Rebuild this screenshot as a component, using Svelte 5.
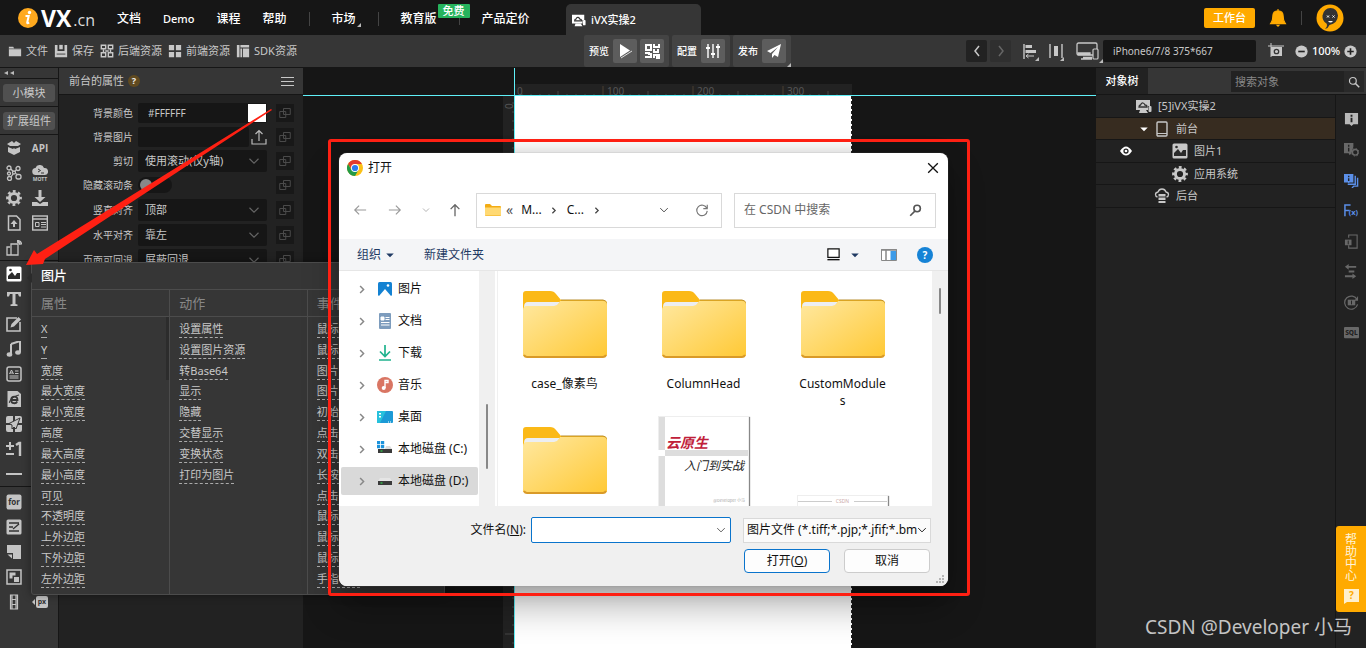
<script>
  const icons = {
    folder: '<path d="M1 3h5l1 2h8v9H1z" fill="currentColor"/><path d="M1 5.500h14" stroke="#363636" stroke-width=".7"/>',
    save: '<path d="M1 1h3v7h8V1h3v14H1z" fill="currentColor"/><path d="M6 1h4v5H6z" fill="currentColor"/><path d="M3 11.500h10" stroke="#363636"/>',
    backres: '<g fill="none" stroke="currentColor" stroke-width="1.600"><path d="M1.500 1.500h5v4h-5zM9.500 1.500h5v4h-5zM1.500 10h5v4.500h-5zM9.500 10h5v4.500h-5z"/><path d="M4 6v3M12 6v3M6 8h4"/></g>',
    frontres: '<path d="M1 1h6v6H1zM9 1h6v6H9zM1 9h6v6H1zM9 9h6v6H9z" fill="currentColor"/>',
    sdk: '<path d="M1 1h3v14H1zM5 1h10v3H5zM5 5h2v10H5zM8 5h7v10H8z" fill="currentColor"/>',
    app: '<path d="M0 2h14v6h-2v4H0z" fill="currentColor"/><path d="M4 12h6l2 3H3z" fill="currentColor"/><path d="M3 9c0-2 1.500-2 1.500-2s1-2.500 2.500-2 2 2 2 2 2 0 2 2z" fill="none" stroke="#333" stroke-width="1.300"/><rect x="12.500" y="8" width="3" height="6" rx="1" fill="currentColor"/>',
    play: '<path d="M3 1l10 6.500L3 14z" fill="#fff"/><path d="M4 15l11-7" stroke="#ddd" stroke-width="1"/>',
    qr: '<g fill="none" stroke="#fff" stroke-width="2"><path d="M2 2h5v5H2z"/><path d="M10 1v3h5V1M14 6v3h-4V6M1 10h4v2M1 14h6v-4M10 15v-3h3v3h2v-4"/></g>',
    sliders: '<g stroke="#fff" stroke-width="1.400"><path d="M3 1v14M8 1v14M13 1v14"/><path d="M1 5h4M6 11h4M11 4h4" stroke-width="2"/></g>',
    plane: '<path d="M15 1L1 8l3.500 2L12 4 6 11v4l2.500-3L12 14z" fill="#fff"/>',
    left: '<path d="M10 3L6 8l4 5" fill="none" stroke="currentColor" stroke-width="1.500"/>',
    right: '<path d="M6 3l4 5-4 5" fill="none" stroke="currentColor" stroke-width="1.500"/>',
    chev: '<path d="M6 3l5 5-5 5" fill="none" stroke="currentColor" stroke-width="2.200"/>',
    align: '<path d="M1 1v15" stroke="currentColor" stroke-width="1.400"/><path d="M2.500 2H9v3H2.500zM2.500 7H13v3H2.500z" fill="currentColor"/><path d="M3 13h8M5.500 11L3 13l2.500 2" stroke="currentColor" fill="none"/>',
    dist: '<path d="M2 1v14M14 1v14" stroke="currentColor" stroke-width="1.400"/><path d="M6 3h4v10H6z" fill="currentColor"/>',
    devices: '<g fill="none" stroke="currentColor" stroke-width="1.300"><rect x="1" y="1" width="20" height="12" rx="1.500"/><path d="M2 11h12v1.500H2z"/><path d="M7 15.500h9M5 17h11"/></g><rect x="17" y="7" width="5" height="10" rx="1" fill="#363636" stroke="currentColor" stroke-width="1.200"/>',
    shot: '<path d="M0 3h16M3 0v14" stroke="currentColor"/><path d="M3 4h11v9H3z" fill="currentColor"/><circle cx="8.500" cy="8.500" r="2.200" fill="none" stroke="#363636" stroke-width="1.300"/>',
    minus: '<circle cx="8" cy="8" r="7.500" fill="currentColor"/><path d="M4 8h8" stroke="#222" stroke-width="2"/>',
    plus: '<circle cx="8" cy="8" r="7.500" fill="currentColor"/><path d="M4 8h8M8 4v8" stroke="#222" stroke-width="2"/>',
    bell: '<path d="M8 0v2M8 1.500c3.500 0 4.600 2.500 4.600 5 0 4 1 5 2 6.500H1.400c1-1.500 2-2.500 2-6.500 0-2.500 1.100-5 4.600-5z" fill="#fa0" stroke="#fa0"/><path d="M6 14h4l-2 2z" fill="#fa0"/>',
    link: '<g fill="none" stroke="currentColor" stroke-width="1.300"><path d="M1 6h8v8H1zM6 2h9v8H6z"/></g>',
    box: '<path d="M1 4l5-3 2 2 2-2 5 3-3 2H4zM2 7l5 2 1-1 1 1 5-2v5l-6 3-6-3z" fill="currentColor"/>',
    net: '<g fill="none" stroke="currentColor" stroke-width="1.300"><circle cx="3" cy="3" r="2"/><circle cx="3" cy="8.500" r="1.500"/><circle cx="3.500" cy="13.500" r="2"/><circle cx="12" cy="3.500" r="2"/><circle cx="8" cy="7.500" r="1.500"/><path d="M5 4l2 2.500M10 5L9 6.500M5 12l2-3M9.500 8.500l2 1"/><rect x="10" y="9.500" width="5" height="4.500" rx="2"/></g>',
    mqtt: '<path d="M4 10a3.500 3.500 0 01-.5-7A4.500 4.500 0 0112 3a3.500 3.500 0 011 7z" fill="currentColor"/><path d="M6 4l2.500 1.500L6 7M9 8h3" stroke="#363636" fill="none"/><text x="8" y="15.500" font-size="5" font-weight="700" text-anchor="middle" fill="currentColor">MQTT</text>',
    gear: '<circle cx="8" cy="8" r="4.600" fill="none" stroke="currentColor" stroke-width="3"/><circle cx="8" cy="8" r="6.700" fill="none" stroke="currentColor" stroke-width="2.400" stroke-dasharray="2.800 2.462" stroke-dashoffset="1.400"/>',
    download: '<path d="M6.500 0h3v7h4L8 12 2.500 7h4zM0 12h5l3 2 3-2h5v4H0z" fill="currentColor"/>',
    fileadd: '<path d="M2.500 1h8l3.500 3.500V15H2.500z" fill="none" stroke="currentColor" stroke-width="1.500"/><path d="M8 5l3.500 4H9v3H7V9H4.500z" fill="currentColor"/>',
    form: '<rect x=".7" y="1" width="14.600" height="14" fill="none" stroke="currentColor" stroke-width="1.400"/><path d="M1 4h14" stroke="currentColor" stroke-width="1.500"/><path d="M3.500 7.500h3.500v4H3.500zM9 7.500h5M9 9.500h5M9 12h5" fill="none" stroke="currentColor"/>',
    phones: '<g fill="none" stroke="currentColor" stroke-width="1.300"><path d="M4 7H1v8h4M5 4h7v11H5zM11 2q3 0 3 3M11 .5q4.500 0 4.500 4"/></g>',
    image: '<rect x=".5" y=".5" width="15" height="15" rx="1.500" fill="currentColor"/><path d="M2 13V10l4-4 3 4 2-3h3v6z" fill="#2b2b2b"/><circle cx="4.500" cy="4" r="1.300" fill="#2b2b2b"/>',
    text: '<path d="M1 1h14v4.500h-2L12 3H9.500v10l2 .5V15h-7v-1.500l2-.5V3H4l-1 2.500H1z" fill="currentColor"/>',
    edit: '<path d="M11 2H1v13h13V6" fill="none" stroke="currentColor" stroke-width="1.600"/><path d="M4.500 11.500l1-3.500 7-7 2.500 2.500-7 7z" fill="currentColor"/>',
    music: '<path d="M5 3l9-3v11.500" fill="none" stroke="currentColor" stroke-width="2"/><path d="M5 3v10" stroke="currentColor" stroke-width="2"/><ellipse cx="3.500" cy="13.500" rx="2.800" ry="2.200" fill="currentColor"/><ellipse cx="12" cy="11.500" rx="2.800" ry="2.200" fill="currentColor"/>',
    para: '<rect x="1" y="1" width="14" height="14" rx="2" fill="none" stroke="currentColor" stroke-width="1.500"/><path d="M3.500 8l2-4 2 4M4 7h3M9 5h3.500M9 7.500h3.500M3.500 10h9M3.500 12h9" fill="none" stroke="currentColor"/>',
    page: '<path d="M1.500 0h10L15 3v13H1.500z" fill="currentColor"/><path d="M5 9h6.500c0-4.500-6-4.500-6.500 0 0 4 5 4 6.200 1.500" fill="none" stroke="#363636" stroke-width="1.800"/><path d="M3.500 12c-1-2 4-7 9.500-8" fill="none" stroke="#363636"/>',
    send: '<path d="M0 2q0-2 2-2h5v7H0zM9 0h5q2 0 2 2v5H9zM0 9h7v7H2q-2 0-2-2zM9 9h7v5q0 2-2 2H9z" fill="currentColor"/><path d="M14 2L3 7.500l3 1.500v4l2-2 2 2z" fill="currentColor" stroke="#363636"/>',
    pm: '<path d="M0 5h8M4 1v8M0 13h8" stroke="currentColor" stroke-width="2"/><path d="M10 4l3-2h1v13" fill="none" stroke="currentColor" stroke-width="2.400"/>',
    line: '<path d="M0 8h16" stroke="currentColor" stroke-width="2"/>',
    for: '<rect x=".5" y=".5" width="15" height="15" rx="2" fill="currentColor"/><text x="8" y="10.500" font-size="8" font-weight="700" text-anchor="middle" fill="#333">for</text>',
    sign: '<rect x=".5" y=".5" width="15" height="15" rx="1.500" fill="currentColor"/><path d="M3 4h10M3 8h4M3 12h10M7 10l6-5" stroke="#333" stroke-width="1.300"/>',
    note: '<path d="M1 1h14v14H7V9H1z" fill="currentColor"/><path d="M1.500 10.500H6v4z" fill="currentColor"/>',
    layers: '<rect x="1" y="1" width="14" height="14" fill="none" stroke="currentColor" stroke-width="1.500"/><path d="M3.500 3.500h6v3h-3v3h-3zM8 8h5v5H8z" fill="currentColor"/>',
    film: '<path d="M4.500 1h7v14h-7zM6 5.500h4M6 10.500h4M6 1v14M10 1v14" fill="none" stroke="currentColor" stroke-width="1.200"/>',
    px: '<path d="M0 8l3-3v6z" fill="currentColor"/><rect x="4" y="2" width="12" height="12" rx="2" fill="currentColor"/><text x="10" y="10" font-size="7" font-weight="700" text-anchor="middle" fill="#333">px</text>',
    phone: '<rect x="3" y="1" width="10" height="14" rx="1" fill="none" stroke="currentColor" stroke-width="1.400"/><path d="M3 12.500h10" stroke="currentColor"/>',
    server: '<path d="M3.500 9Q1.500 8.500 1.500 6.500T4 4q1-3 4-3t4 3q2.500.5 2.500 2.500T12.500 9" fill="none" stroke="currentColor" stroke-width="1.300"/><path d="M4.500 6h7v2.500h-7zM4.500 9.500h7V12h-7zM4.500 13h7v2h-7z" fill="currentColor"/>',
    eye: '<path d="M0 8q8-12 16 0-8 12-16 0z" fill="#fff"/><circle cx="8" cy="8" r="3.500" fill="#222"/><circle cx="8" cy="8" r="1.800" fill="#fff"/>',
    info: '<path d="M1 1h14v12h-5l-2 2-2-2H1z" fill="currentColor"/><path d="M8 3v2M8 6v5" stroke="#222" stroke-width="2"/>',
    infogear: '<path d="M0 1h10v4L8 12l-2 2-1-2H0z" fill="currentColor"/><path d="M5 3v2M5 6v4" stroke="#222" stroke-width="1.500"/><circle cx="12" cy="11" r="3" fill="#222" stroke="currentColor" stroke-width="1.500"/><circle cx="12" cy="11" r="4" fill="none" stroke="currentColor" stroke-dasharray="1.570 1.570"/>',
    infos: '<path d="M0 1h10v9H6l-1 1-1-1H0z" fill="currentColor"/><path d="M12 3v9H4M14.500 5v9h-4l-2 2" fill="none" stroke="currentColor" stroke-width="1.500"/><path d="M5 3v1.500M5 5.500v3" stroke="#222" stroke-width="1.500"/>',
    fx: '<path d="M1 14V2h6M1 8h5" fill="none" stroke="currentColor" stroke-width="1.600"/><text x="5" y="13" font-size="8" font-weight="700" fill="currentColor">(x)</text>',
    infodoc: '<path d="M5 4V1h9v14H5v-3" fill="none" stroke="currentColor" stroke-width="1.200"/><path d="M1 6h7v6H1z" fill="currentColor"/><path d="M4.500 7v4" stroke="#222"/>',
    swap: '<path d="M3 3h10M1 13h10M5 8h6" stroke="currentColor" stroke-width="2"/><path d="M5 0L1 3l4 3zM9 10l4 3-4 3z" fill="currentColor"/>',
    cycle: '<path d="M14 5a7 7 0 10.500 5" fill="none" stroke="currentColor" stroke-width="1.300"/><path d="M15 1v5h-4z" fill="currentColor"/><path d="M4 5h8v6H4z" fill="currentColor"/><path d="M8 6v4" stroke="#222"/>',
    sql: '<rect x="0" y="2" width="16" height="12" rx="1" fill="currentColor"/><text x="8" y="10.500" font-size="7" font-weight="800" text-anchor="middle" fill="#222">SQL</text>',
    search: '<circle cx="6.500" cy="6.500" r="4.500" fill="none" stroke="currentColor" stroke-width="1.600"/><path d="M10 10l5 5" stroke="currentColor" stroke-width="2"/>',
    burger: '<path d="M0 3h16M0 8h16M0 13h16" stroke="currentColor" stroke-width="1.300"/>',
    upload: '<path d="M1 10v5h14v-5M8 12V2M4.500 5L8 1.500 11.500 5" fill="none" stroke="#bbb" stroke-width="1.200"/>',
    down: '<path d="M2 5l6 6 6-6" fill="none" stroke="currentColor" stroke-width="1.500"/>',
    arrowl: '<path d="M15 8H2M7 3L2 8l5 5" fill="none" stroke="currentColor" stroke-width="1.300"/>',
    arrowr: '<path d="M1 8h13M9 3l5 5-5 5" fill="none" stroke="currentColor" stroke-width="1.300"/>',
    arrowu: '<path d="M8 15V2M3 7l5-5 5 5" fill="none" stroke="currentColor" stroke-width="1.500"/>',
    refresh: '<path d="M13.500 6A6 6 0 1014 9M14 2v4.500H9.500" fill="none" stroke="#777" stroke-width="1.300"/>',
    find: '<circle cx="10" cy="5.500" r="4" fill="none" stroke="currentColor" stroke-width="2"/><path d="M7.500 8.500L1.500 14.500" stroke="currentColor" stroke-width="2"/>',
    close: '<path d="M2.500 2.500l11 11M13.500 2.500l-11 11" stroke="#111" stroke-width="1.500"/>',
    chrome: '<circle cx="8" cy="8" r="8" fill="#fbc116"/><path d="M8 4h6.930A8 8 0 001.070 4L5 10z" fill="#e33b2e"/><path d="M1.070 4A8 8 0 008 16l3.500-6L8 8l-3.500 2z" fill="#229a47"/><circle cx="8" cy="8" r="4" fill="#fff"/><circle cx="8" cy="8" r="3.100" fill="#2b7cf0"/>',
    pics: '<rect x="1" y="1" width="14" height="14" rx="1.500" fill="#1482d2"/><path d="M2 15l6-7 6 7z" fill="#fff"/><circle cx="11" cy="4.500" r="1.300" fill="#fff"/>',
    docs: '<rect x="2" y="0" width="12" height="16" rx="1" fill="#7d9cbd"/><path d="M4 4h3v3H4zM8.500 4.500h4M8.500 6.500h4M4 9.500h8.500M4 12h8.500" stroke="#fff" fill="#fff"/>',
    dl: '<path d="M8 0v11M3 6.500l5 5 5-5M2 15h12" fill="none" stroke="#20b38e" stroke-width="1.700"/>',
    tune: '<circle cx="8" cy="8" r="8" fill="#d97563"/><path d="M8 11V3.500h3v2H8" fill="none" stroke="#fff" stroke-width="1.400"/><circle cx="6.700" cy="11" r="2" fill="#fff"/>',
    desk: '<rect x="0" y="2" width="16" height="12" rx="1" fill="#1c9ad6"/><path d="M0 2h9L3 14H0z" fill="#27c1dc"/><path d="M2 4h2v1.500H2zM2 7h2v1.500H2zM11 12.500h1v1h-1zM13 12.500h1v1h-1z" fill="#fff"/>',
    diskc: '<path d="M0 0h3.200v3.200H0zM4 0h3.200v3.200H4zM0 4h3.200v3.200H0zM4 4h3.200v3.200H4z" fill="#1c93dc"/><path d="M9 5h4l2 3H8z" fill="#ddd"/><path d="M1 8h14v4H1z" fill="#3a3a3a"/><path d="M3.500 9.500h2v1h-2z" fill="#2df04f"/>',
    diskd: '<path d="M3 5h10l2 3H1z" fill="#e5e5e5"/><path d="M1 8h14v4H1z" fill="#3a3a3a"/><path d="M3.500 9.500h2v1h-2z" fill="#2df04f"/>',
    sfolder: '<path d="M0 3q0-1 1-1h4l2 2h8q1 0 1 1v8q0 1-1 1H1q-1 0-1-1z" fill="#f3ac14"/><path d="M0 5.500h16V13q0 .5-1 .5H1q-1 0-1-.5z" fill="#ffd973"/>',
    view: '<path d="M2 2h12v9H2z" fill="#fff" stroke="#111" stroke-width="1.300"/><path d="M1.500 13.500h13" stroke="#111" stroke-width="1.500"/>',
    pane: '<path d="M.5 2.500h15v11H.5z" fill="#fff" stroke="#888"/><path d="M0 3h16M5 3v10" stroke="#888" stroke-width="1.500"/><path d="M9.500 4H15v9H9.500z" fill="#3d9be8"/>',
    tri: '<path d="M3 6h10l-5 5z" fill="currentColor"/>'
  };

  const files = [['folder', '文件'], ['save', '保存'], ['backres', '后端资源'], ['frontres', '前端资源'], ['sdk', 'SDK资源']];
  const palette = [
    [['box', 'api'], ['net', 'mqtt'], ['gear', 'download'], ['fileadd', 'form'], ['phones']],
    [['image'], ['text'], ['edit'], ['music'], ['para'], ['page'], ['send'], ['pm'], ['line']],
    [['for'], ['sign'], ['note'], ['layers'], ['film', 'px']]
  ];
  const props = [
    { label: '背景颜色', kind: 'color', value: '#FFFFFF' },
    { label: '背景图片', kind: 'file', value: '' },
    { label: '剪切', kind: 'select', value: '使用滚动(仅y轴)' },
    { label: '隐藏滚动条', kind: 'toggle' },
    { label: '竖直对齐', kind: 'select', value: '顶部', tall: true },
    { label: '水平对齐', kind: 'select', value: '靠左', tall: true },
    { label: '页面可回退', kind: 'select', value: '屏蔽回退', tall: true }
  ];
  const members = [
    { title: '属性', items: ['X', 'Y', '宽度', '最大宽度', '最小宽度', '高度', '最大高度', '最小高度', '可见', '不透明度', '上外边距', '下外边距', '左外边距'] },
    { title: '动作', items: ['设置属性', '设置图片资源', '转Base64', '显示', '隐藏', '交替显示', '变换状态', '打印为图片'] },
    { title: '事件', items: ['鼠标', '鼠标', '图片', '图片', '初始', '点击', '双击', '长按', '点击', '鼠标', '鼠标', '鼠标', '手指'] }
  ];
  const tree = [
    { icon: 'app', name: '[5]iVX实操2', depth: 0 },
    { icon: 'phone', name: '前台', depth: 1, open: true },
    { icon: 'image', name: '图片1', depth: 2, eye: true },
    { icon: 'gear', name: '应用系统', depth: 2 },
    { icon: 'server', name: '后台', depth: 1 }
  ];
  const side = [['info', 'on'], ['infogear', ''], ['infos', 'blue'], ['fx', 'blue'], ['infodoc', ''], ['swap', ''], ['cycle', ''], ['sql', '']];
  const places = [['pics', '图片'], ['docs', '文档'], ['dl', '下载'], ['tune', '音乐'], ['desk', '桌面'], ['diskc', '本地磁盘 (C:)'], ['diskd', '本地磁盘 (D:)']];
  const folders = ['case_像素鸟', 'ColumnHead', 'CustomModules', ''];
  const xTicks = Array.from({ length: 37 }, (_, i) => i);
  const yTicks = Array.from({ length: 62 }, (_, i) => i);
</script>

{#snippet icon(name, size = 16)}
  <svg class="ic" width={size} height={size} viewBox="0 0 16 16" aria-hidden="true">{@html icons[name]}</svg>
{/snippet}

{#snippet bigFolder()}
  <svg class="big" width="84" height="68" viewBox="0 0 84 68" aria-hidden="true">
    <defs>
      <linearGradient id="fold" x1="0" y1="0" x2="1" y2="1">
        <stop offset="0" stop-color="#ffe8a0" /><stop offset="1" stop-color="#ffc935" />
      </linearGradient>
    </defs>
    <path d="M0 64V4q0-3 3-3h24q4 0 6 3l5 6h42q4 0 4 4v50q0 3-3 3H3q-3 0-3-3z" fill="#fbb917" />
    <path d="M38 10h42q3 0 4 4" fill="none" stroke="#b98f30" />
    <path d="M1 17q0-5 4-5h32l-4 5H1z" fill="#eceef2" />
    <path d="M0 20q0-4 4-4h27q3 0 5-3l1-2h43q4 0 4 4v48q0 4-4 4H4q-4 0-4-4z" fill="url(#fold)" />
    <path d="M1 65q1 2 3 2h76q2 0 3-2" fill="none" stroke="#d99a28" stroke-width="2" />
  </svg>
{/snippet}

<div class="app">
  <header class="top">
    <a class="logo" href="#home" aria-label="iVX.cn">
      <svg width="22" height="22" viewBox="0 0 22 22" aria-hidden="true">
        <circle cx="11" cy="11" r="10" fill="#ffa91e" />
        <circle cx="12.500" cy="5.500" r="1.700" fill="#fff" />
        <path d="M8.500 9h3.200l-1.500 6.500q-.2 1.200 2 .2" fill="none" stroke="#fff" stroke-width="2" />
      </svg>
      <strong>VX</strong><span>.cn</span>
    </a>
    <nav class="menu">
      <a href="#docs">文档</a><a href="#demo" class="latin">Demo</a><a href="#course">课程</a><a href="#help">帮助</a>
      <i class="bar"></i>
      <a href="#market" class="corner">市场</a>
      <i class="bar"></i>
      <a href="#edu" class="edu">教育版<b>免费</b></a>
      <i class="bar short"></i>
      <a href="#price">产品定价</a>
    </nav>
    <a class="tab" href="#project">{@render icon('app', 14)}iVX实操2</a>
    <div class="account">
      <button class="work">工作台</button>
      <button class="plain" aria-label="通知">{@render icon('bell', 18)}</button>
      <i class="bar"></i>
      <button class="plain" aria-label="账户">
        <svg class="ic" width="28" height="28" viewBox="0 0 28 28" aria-hidden="true">
          <circle cx="14" cy="14" r="13.500" fill="#fa0" />
          <path d="M9 25q3-3 1.500-5.500Q6 16.500 6.500 11.500 8 4 14.500 4T22 11.500q-.5 8-8.500 9.500-1 3-4.500 4z" fill="#333" />
          <path d="M11 11.500l2 2m0-2l-2 2M16.500 11.500l2 2m0-2l-2 2" stroke="#fff" />
          <path d="M12 17q2.500 3 5 0z" fill="#fff" />
        </svg>
      </button>
    </div>
  </header>

  <div class="tools">
    <div class="filetools">
      {#each files as [ic, name]}<button>{@render icon(ic, 14)}{name}</button>{/each}
    </div>
    <div class="groups">
      <div class="group"><span>预览</span><button aria-label="播放">{@render icon('play')}</button><button aria-label="二维码">{@render icon('qr')}</button></div>
      <div class="group"><span>配置</span><button aria-label="参数">{@render icon('sliders')}</button></div>
      <div class="group corner"><span>发布</span><button aria-label="发送">{@render icon('plane')}</button></div>
    </div>
    <div class="viewtools">
      <button class="hist" aria-label="撤销">{@render icon('left')}</button>
      <button class="hist off" aria-label="重做">{@render icon('right')}</button>
      <button class="corner al" aria-label="对齐">{@render icon('align')}</button>
      <button class="corner di" aria-label="分布">{@render icon('dist')}</button>
      <button class="corner de" aria-label="设备">
        <svg class="ic" width="23" height="19" viewBox="0 0 23 19" aria-hidden="true">{@html icons.devices}</svg>
      </button>
      <input class="device" aria-label="设备尺寸" value="iPhone6/7/8 375*667" />
      <button class="shot" aria-label="截图">{@render icon('shot')}</button>
      <button aria-label="缩小">{@render icon('minus', 13)}</button>
      <span class="zoom">100%</span>
      <button aria-label="放大">{@render icon('plus', 13)}</button>
    </div>
  </div>

  <main>
    <aside class="palette">
      <button class="fold" aria-label="收起"><i></i><i></i></button>
      <div class="chip"><button>小模块</button></div>
      <div class="chip"><button>扩展组件</button></div>
      {#each palette as group}
        <div class="pgroup">
          {#each group as row}
            <div class="prow">
              {#each row as name}
                <button class:on={name === 'image'} aria-label={name === 'api' ? null : name}>
                  {#if name === 'api'}<b>API</b>{:else}{@render icon(name)}{/if}
                </button>
              {/each}
            </div>
          {/each}
        </div>
      {/each}
    </aside>

    <section class="props">
      <h2>前台的属性 <em>?</em><button aria-label="菜单">{@render icon('burger', 13)}</button></h2>
      {#each props as p, i}
        <div class="prop" class:tall={p.tall}>
          <label for={'prop' + i}>{p.label}</label>
          {#if p.kind === 'color'}
            <div class="field"><input id={'prop' + i} value={p.value} /><i class="swatch"></i></div>
          {:else if p.kind === 'file'}
            <div class="field open"><input id={'prop' + i} value="" /><button aria-label="上传">{@render icon('upload')}</button></div>
          {:else if p.kind === 'toggle'}
            <div class="toggle"><input id={'prop' + i} type="checkbox" /></div>
          {:else}
            <div class="select"><select id={'prop' + i}><option>{p.value}</option></select>{@render icon('down', 12)}</div>
          {/if}
          <button class="bind" aria-label="绑定">{@render icon('link', 12)}</button>
        </div>
      {/each}
    </section>

    <section class="canvas">
      <svg class="rulerx" width="337" height="11" aria-hidden="true">
        {#each xTicks as t}
          {#if t % 10 === 0 && t > 0}<path d="M{t * 9 - 2} 2v9" stroke="#4a3f30" /><text x={t * 9 + 2} y="11">{t * 10}</text>
          {:else if t > 0}<path d="M{t * 9 - 2} {t % 5 ? 10 : 7}v4" stroke="#444" />{/if}
        {/each}
        <text x="2" y="11">0</text>
      </svg>
      <svg class="rulery" width="11" height="552" aria-hidden="true">
        {#each yTicks as t}
          {#if t > 0}<path d="M{t % 10 ? 9 : 2} {t * 9 - 2}H11" stroke="#444" />{/if}
        {/each}
        <text transform="translate(10 13) rotate(-90)">0</text>
      </svg>
      <div class="board"></div>
      <i class="guidex"></i><i class="guidey"></i>
    </section>

    <aside class="objects">
      <div class="ohead">
        <button class="otab">对象树</button>
        <input type="search" aria-label="搜索对象" placeholder="搜索对象" />
        <button class="osearch" aria-label="搜索">{@render icon('search', 12)}</button>
      </div>
      <div class="obody">
        <ul class="tree">
          {#each tree as n}
            <li class:sel={n.open} class="d{n.depth}">
              {#if n.eye}<span class="eye">{@render icon('eye', 12)}</span>{/if}
              {#if n.open}<span class="twist">{@render icon('tri', 12)}</span>{/if}
              {@render icon(n.icon)}<span>{n.name}</span>
            </li>
          {/each}
        </ul>
        <div class="side">
          <div class="sideicons">
            {#each side as [name, tone]}<button class={tone} aria-label={name}>{@render icon(name, 15)}</button>{/each}
          </div>
          <a class="help" href="#support">
            <span>帮助中心</span>
            <svg width="17" height="16" viewBox="0 0 17 16" aria-hidden="true"><path d="M1 1h15v13H4l-3 2z" fill="#fff0cd" /><text x="8.500" y="11" font-size="10" font-weight="700" text-anchor="middle" fill="#fa0">?</text></svg>
          </a>
        </div>
      </div>
    </aside>
  </main>

  <section class="members">
    <h3>图片</h3>
    <div class="cols">
      {#each members as col}
        <div class="col">
          <h4>{col.title}</h4>
          <ul>{#each col.items as it}<li><span>{it}</span></li>{/each}</ul>
        </div>
      {/each}
    </div>
  </section>

  <div class="dialog" role="dialog" aria-label="打开">
    <div class="dtitle">{@render icon('chrome')}<span>打开</span><button aria-label="关闭">{@render icon('close', 14)}</button></div>
    <div class="dnav">
      <button class="dim" aria-label="后退">{@render icon('arrowl', 14)}</button>
      <button class="dim" aria-label="前进">{@render icon('arrowr', 14)}</button>
      <button class="dim rec" aria-label="最近">{@render icon('down', 8)}</button>
      <button class="up" aria-label="上一级">{@render icon('arrowu', 14)}</button>
      <div class="addr">
        {@render icon('sfolder')}<span class="dbl">«</span><span class="m">M...</span>{@render icon('chev', 9)}<span class="c">C...</span>{@render icon('chev', 9)}
        <button class="hist2" aria-label="历史">{@render icon('down', 10)}</button><button aria-label="刷新">{@render icon('refresh', 14)}</button>
      </div>
      <div class="dsearch"><input type="search" aria-label="搜索" placeholder="在 CSDN 中搜索" />{@render icon('find', 13)}</div>
    </div>
    <div class="dbar">
      <button class="org">组织{@render icon('tri', 12)}</button><button>新建文件夹</button>
      <button class="view" aria-label="视图">{@render icon('view', 15)}</button>
      <button class="vt" aria-label="视图选项">{@render icon('tri', 12)}</button>
      <button class="pane" aria-label="预览窗格">{@render icon('pane')}</button>
      <button class="q" aria-label="帮助">?</button>
    </div>
    <div class="dbody">
      <ul class="places">
        {#each places as [ic, name], i}
          <li class:cur={i === 6}><span class="chev">{@render icon('chev', 11)}</span>{@render icon(ic)}<span>{name}</span></li>
        {/each}
      </ul>
      <div class="track nav"><i></i></div>
      <div class="files">
        {#each folders as name}<figure>{@render bigFolder()}<figcaption>{name}</figcaption></figure>{/each}
        <div class="book">
          <p class="red">云原生</p><p class="rule"></p><p class="ink">入门到实战</p>
          <small>@Developer 小马</small>
        </div>
        <div class="sheet"><span>CSDN</span></div>
      </div>
      <div class="track main"><i></i></div>
    </div>
    <div class="dfoot">
      <div class="frow">
        <label for="fname">文件名(<u>N</u>):</label>
        <div class="combo"><input id="fname" type="text" />{@render icon('down', 10)}</div>
        <div class="ftype"><select aria-label="文件类型"><option>图片文件 (*.tiff;*.pjp;*.jfif;*.bm</option></select>{@render icon('down', 10)}</div>
      </div>
      <div class="frow btns"><button class="ok">打开(<u>O</u>)</button><button>取消</button></div>
      <svg class="grip" width="10" height="10" viewBox="0 0 10 10" aria-hidden="true"><path d="M6 0h2v2H6zM3 3h2v2H3zM6 3h2v2H6zM0 6h2v2H0zM3 6h2v2H3zM6 6h2v2H6z" fill="#b5b5b5" /></svg>
    </div>
  </div>

  <div class="frame"></div>
  <svg class="arrow" width="260" height="170" viewBox="0 0 260 170" aria-hidden="true">
    <path d="M4 164L12 149l3 4L249 8l1 1L23 158l-2 5z" fill="#fe2013" />
  </svg>
  <div class="mark">CSDN @Developer 小马</div>
</div>

<style>
  :global(body) { margin: 0; background: #161616; }
  .app, .app * { box-sizing: border-box; }
  .app { position: relative; display: flex; flex-direction: column; min-height: 100vh; overflow: hidden; background: #161616; color: #c8c8c8; font: 11px/16px "Noto Sans", "Noto Sans CJK SC", sans-serif; }
  button, input, select { font: inherit; color: inherit; border: 0; margin: 0; padding: 0; background: none; outline: 0; border-radius: 0; }
  input, select { appearance: none; min-width: 0; }
  button { display: inline-flex; align-items: center; justify-content: center; flex: none; white-space: nowrap; }
  a { color: inherit; text-decoration: none; white-space: nowrap; }
  ul { list-style: none; margin: 0; padding: 0; }
  h2, h3, h4, p, figure { margin: 0; font-weight: 400; }
  .ic { display: block; flex: none; }
  i { font-style: normal; display: block; }

  .top { display: flex; height: 35px; color: #fff; font-size: 12px; font-weight: 500; }
  .logo { display: flex; align-items: center; width: 117px; padding-left: 17px; }
  .logo strong { font: 700 23px/24px "Open Sans", sans-serif; margin-left: 2px; }
  .logo span { font: 16px/24px "Open Sans", sans-serif; margin: 4px 0 0 2px; color: #ddd; }
  .menu { display: flex; align-items: center; width: 449px; padding-top: 2px; }
  .menu a { margin-right: 22px; }
  .menu .latin { font-size: 11px; }
  .bar { width: 1px; height: 14px; background: #444; margin-right: 22px; }
  .bar.short { height: 8px; align-self: flex-end; margin-bottom: 10px; }
  .corner { position: relative; }
  .corner::after { content: ""; position: absolute; right: -5px; bottom: 0; border: 2px solid; border-color: transparent #bbb #bbb transparent; }
  .edu { position: relative; }
  .edu b { position: absolute; left: 37px; top: -7px; width: 32px; height: 14px; background: #26b35c; border-radius: 1px; font: 500 11px/13px "Noto Sans CJK SC", sans-serif; text-align: center; }
  .tab { display: flex; align-items: center; gap: 5px; width: 135px; margin-top: 4px; padding-left: 6px; background: #363636; border-radius: 5px 5px 0 0; font-size: 11px; }
  .account { display: flex; align-items: center; margin-left: auto; padding-right: 22px; }
  .account .bar { margin: 0 14px; }
  .work { width: 51px; height: 20px; background: #fa0; border-radius: 2px; font-size: 11px; margin-right: 14px; }

  .tools { display: flex; height: 33px; background: #363636; border-bottom: 1px solid #161616; }
  .filetools { display: flex; gap: 6px; padding-left: 8px; width: 584px; }
  .filetools button { gap: 4px; }
  .groups { display: flex; gap: 3px; }
  .group { display: flex; align-items: center; gap: 3px; padding: 0 5px; background: #444; border-radius: 2px; color: #fff; font-size: 10px; }
  .group.corner::after { right: 0; }
  .group span { margin-right: 1px; font-weight: 500; }
  .group button { width: 24px; height: 24px; background: #5d5d5d; border-radius: 2px; }
  .viewtools { display: flex; align-items: center; margin-left: auto; padding-right: 9px; }
  .hist { width: 21px; height: 22px; background: #222; border-radius: 2px; margin-right: 3px; }
  .hist.off { background: #2f2f2f; color: #666; margin-right: 12px; }
  .al { margin-right: 9px; }
  .di { margin-right: 12px; }
  .al::after, .di::after { right: 0; bottom: -2px; }
  .de { margin-right: 4px; }
  .de::after { right: -4px; bottom: -2px; }
  .device { width: 153px; height: 22px; background: #161616; border-radius: 2px; padding-left: 10px; font-size: 10px; }
  .shot { margin: 0 11px 0 12px; }
  .zoom { color: #fff; width: 36px; text-align: center; font-size: 11px; font-weight: 500; }

  main { display: flex; flex: 1; }
  .palette { width: 59px; background: #363636; border-right: 1px solid #161616; }
  .fold { display: flex; justify-content: flex-start; gap: 2px; width: 100%; height: 11px; padding-left: 4px; border-bottom: 1px solid #161616; }
  .fold i { border: 2px solid transparent; border-right: 4px solid #bbb; border-left: 0; }
  .chip { height: 28px; padding: 5px 3px; border-bottom: 1px solid #161616; }
  .chip button { width: 52px; height: 18px; background: #505050; border-radius: 3px; }
  .pgroup { border-bottom: 1px solid #161616; }
  .pgroup + .pgroup { margin-bottom: 2px; }
  .pgroup:last-child { border: 0; }
  .prow { display: flex; height: 25px; padding-left: 6px; gap: 10px; }
  .prow button { width: 16px; color: #c4c4c4; }
  .prow button.on { color: #fff; }
  .prow b { font: 700 10px/12px "Open Sans", sans-serif; }

  .props { width: 244px; background: #222; font-size: 11px; }
  .props h2 { display: flex; align-items: center; height: 27px; padding: 0 9px 0 10px; margin-bottom: 6px; background: #363636; border-bottom: 1px solid #161616; font-size: 11px; }
  .props em { width: 12px; height: 12px; margin-left: 4px; border-radius: 50%; background: #604a20; color: #eee; font: 700 9px/12px "Noto Sans", sans-serif; text-align: center; }
  .props h2 button { margin-left: auto; }
  .prop { display: grid; grid-template-columns: 74px 129px 18px; column-gap: 5px; align-items: center; height: 24px; }
  .prop.tall { height: 25px; }
  .prop label { text-align: right; font-size: 10px; white-space: nowrap; }
  .field { display: flex; height: 20px; background: #161616; border-radius: 2px; }
  .field input { flex: 1; padding-left: 10px; font-size: 10px; }
  .swatch { width: 18px; height: 18px; margin: 1px; background: #fff; }
  .field.open { background: none; }
  .field.open input { background: #161616; border-radius: 2px; }
  .field button { width: 18px; padding-left: 1px; }
  .select, .ftype { display: grid; align-items: center; }
  .select { height: 22px; background: #161616; border-radius: 2px; }
  .select select, .select .ic { grid-area: 1 / 1; }
  .select select { padding-left: 7px; height: 22px; }
  .select .ic { justify-self: end; margin-right: 7px; color: #666; pointer-events: none; }
  .toggle input { display: block; width: 34px; height: 16px; border-radius: 8px; background: #161616; }
  .toggle input::after { content: ""; display: block; width: 12px; height: 12px; margin: 2px; border-radius: 50%; background: #888; }
  .bind { width: 18px; height: 18px; margin-left: 4px; background: #181818; color: #4c4c4c; }

  .canvas { flex: 1; display: grid; grid-template-columns: 200px 11px 1px 337px 1fr; grid-template-rows: 16px 11px 1px 1fr; overflow: hidden; }
  .canvas svg { background: #222; font: 10px/11px "Noto Sans", sans-serif; fill: #555; overflow: visible; }
  .rulerx { grid-area: 2 / 4; }
  .rulery { grid-area: 4 / 2; }
  .board { grid-area: 4 / 4; background: #fff; border-right: 1px dashed #222; }
  .guidex { grid-area: 3 / 1 / 4 / -1; background: #5ff0f8; }
  .guidey { grid-area: 1 / 3 / -1 / 4; background: #5ff0f8; }

  .objects { width: 270px; display: flex; flex-direction: column; background: #222; }
  .ohead { display: flex; height: 27px; padding-right: 2px; background: #363636; border-bottom: 1px solid #161616; }
  .otab { width: 52px; background: #222; color: #fff; font-weight: 500; margin-right: auto; }
  .ohead input { width: 113px; height: 21px; margin-top: 3px; padding-left: 4px; background: #222; }
  .ohead input::placeholder { color: #888; }
  .osearch { width: 20px; height: 21px; margin-top: 3px; background: #292929; }
  .obody { display: flex; flex: 1; }
  .tree { flex: 1; }
  .tree li { display: flex; align-items: center; gap: 6px; height: 23px; border-bottom: 1px solid #161616; }
  .tree li:nth-child(even) { height: 22px; }
  .d0 { padding-left: 40px; }
  .d1 { padding-left: 58px; }
  .d2 { padding-left: 76px; }
  .tree .sel { padding-left: 42px; background: #372c20; }
  .twist { color: #fff; margin-right: -2px; }
  .eye { margin: 0 34px 0 -52px; }
  .side { display: flex; flex-direction: column; width: 31px; border-left: 1px solid #161616; }
  .sideicons { display: flex; flex-direction: column; justify-content: space-between; height: 230px; margin-top: 16px; }
  .sideicons button { height: 16px; color: #686868; }
  .sideicons .on { color: #b8b8b8; }
  .sideicons .blue { color: #5b8fe8; }
  .help { display: flex; flex-direction: column; align-items: center; gap: 6px; margin: auto 0 36px; height: 86px; padding-top: 8px; background: #fa0; border-radius: 3px 0 0 3px; color: #fff3d8; font-size: 12px; line-height: 12px; }
  .help span { width: 12px; white-space: normal; }

  .members { position: absolute; left: 31px; top: 262px; width: 414px; height: 333px; display: flex; flex-direction: column; background: #363636; border: 1px solid #4c4c4c; border-radius: 3px; box-shadow: 0 0 8px rgba(0, 0, 0, .4); }
  .members::before { content: ""; position: absolute; left: -5px; top: 10px; border: 5px solid transparent; border-right-color: #2b2b2b; border-left: 0; }
  .members h3 { height: 26px; padding-left: 9px; color: #fff; font-size: 13px; line-height: 24px; font-weight: 500; }
  .cols { display: grid; grid-template-columns: repeat(3, 1fr); flex: 1; border-top: 1px solid #4c4c4c; }
  .col { display: flex; flex-direction: column; }
  .col + .col { border-left: 1px solid #4c4c4c; }
  .col h4 { height: 27px; padding-left: 9px; border-bottom: 1px solid #4c4c4c; color: #888; font-size: 13px; line-height: 26px; }
  .col ul { flex: 1; display: grid; grid-template-rows: repeat(13, 1fr); margin: 0 0 6px; padding-left: 9px; }
  .col li { display: flex; align-items: flex-end; }
  .col li span { border-bottom: 1px dashed #aaa; line-height: 15px; padding-bottom: 1px; }
  .col:first-child ul { border-right: 3px solid; border-image: linear-gradient(#2c2c2c 64px, transparent 64px) 1; }
  .col:last-child li span { min-width: 43px; }

  .dialog { position: absolute; left: 339px; top: 153px; width: 609px; display: flex; flex-direction: column; background: #fff; border-radius: 8px; overflow: hidden; color: #111; font-size: 12px; box-shadow: 0 0 1px #777, 0 2px 20px rgba(0, 0, 0, .2), 0 20px 36px rgba(0, 0, 0, .3); }
  .dtitle { display: flex; align-items: center; gap: 5px; height: 29px; padding: 0 8px; }
  .dtitle button { margin-left: auto; }
  .dnav { display: flex; align-items: center; height: 57px; padding: 0 12px 1px 14px; }
  .dnav > button { color: #666; width: 14px; margin-right: 21px; }
  .dnav > .dim { color: #999; }
  .dnav > .rec { width: 8px; margin: 0 18px 0 -1px; }
  .dnav > .up { margin-right: 14px; }
  .addr, .dsearch { display: flex; align-items: center; height: 35px; border: 1px solid #d9d9d9; }
  .addr { flex: 1; padding: 0 12px 0 8px; margin-right: 12px; }
  .addr span { margin-left: 5px; }
  .addr .dbl { font-size: 14px; color: #555; }
  .addr .m { margin: 0 7px 0 8px; }
  .addr .c { margin: 0 8px 0 9px; }
  .addr .ic { color: #444; }
  .hist2 { margin: 0 26px 0 auto; }
  .dsearch { width: 202px; padding: 0 13px 0 9px; color: #555; }
  .dsearch input { flex: 1; }
  .dsearch input::placeholder { color: #666; }
  .dbar { display: flex; align-items: center; height: 32px; padding: 0 15px 0 18px; background: #f4f5f7; border-bottom: 1px solid #e6e6e6; color: #1f3a63; }
  .org { gap: 3px; margin-right: 28px; }
  .view { margin: 0 8px 0 auto; }
  .vt { margin-right: 20px; }
  .pane { margin-right: 20px; }
  .q { width: 16px; height: 16px; border-radius: 50%; background: #1683d6; color: #fff; font-size: 10px; font-weight: 700; }
  .dbody { display: flex; height: 235px; overflow: hidden; }
  .places { width: 140px; padding: 2px 1px 0 2px; }
  .places li { display: flex; align-items: center; gap: 5px; height: 28px; margin: 2px 0 4px; padding-left: 15px; border-radius: 2px; white-space: nowrap; }
  .places .cur { background: #d9d9d9; }
  .chev { color: #888; margin-right: 5px; }
  .track { width: 16px; background: #f0f0f0; }
  .track i { width: 2px; margin: 0 auto; background: #888; border-radius: 1px; }
  .nav i { height: 65px; margin-top: 133px; }
  .main i { height: 26px; margin-top: 17px; }
  .files { flex: 1; display: grid; grid-template-columns: repeat(3, 139px); grid-auto-rows: 136px; align-items: start; background: linear-gradient(90deg, transparent 2px, #f0f0f0 2px, #f0f0f0 3px, transparent 3px); }
  .files figure { display: flex; flex-direction: column; align-items: center; gap: 17px; padding: 19px 22px 0; }
  .files figcaption { width: 90px; text-align: center; line-height: 17px; word-break: break-all; }
  .big { display: block; flex: none; }
  .book { width: 91px; height: 100px; margin: 9px 0 0 24px; padding: 17px 0 0 7px; background: linear-gradient(90deg, #ddd 6px, #fff 6px); border: 1px solid #eee; box-shadow: 1px 1px 1px #888; font-family: "Noto Sans CJK SC", sans-serif; }
  .red { color: #c0203a; font-size: 14px; line-height: 16px; font-weight: 700; font-style: italic; }
  .rule { height: 6px; margin: 0 0 3px -8px; background: #ddd; border-left: 7px solid #fff; }
  .ink { padding-left: 18px; font-size: 12px; line-height: 12px; color: #222; font-style: italic; }
  .book small { display: block; margin-top: 26px; padding-right: 3px; text-align: right; font-size: 4px; line-height: 6px; color: #aaa; }
  .sheet { width: 91px; height: 60px; margin: 88px 0 0 24px; border: 1px solid #eee; box-shadow: 1px 1px 1px #888; text-align: center; background: linear-gradient(#fff 5px, #ccc 5px, #ccc 6px, #fff 6px); }
  .sheet span { display: block; width: 22px; margin: 1px auto; background: #fff; font-size: 5px; line-height: 8px; color: #caa; }
  .dfoot { position: relative; height: 80px; padding: 11px 17px 0; background: #f0f0f0; }
  .frow { display: flex; justify-content: flex-end; align-items: center; }
  .frow label { margin-right: 5px; }
  .combo { display: flex; align-items: center; width: 200px; height: 26px; padding-right: 4px; margin-right: 12px; background: #fff; border: 1px solid #0a74cc; border-radius: 2px; color: #555; }
  .combo input { flex: 1; }
  .ftype { width: 188px; height: 25px; background: #fbfbfb; border: 1px solid #d9d9d9; grid-template-columns: 1fr 10px; padding: 0 3px; }
  .ftype select { white-space: nowrap; }
  .btns { gap: 14px; margin-top: 6px; padding-right: 1px; }
  .btns button { display: block; width: 86px; height: 24px; background: #fdfdfd; border: 1px solid #ccc; border-radius: 4px; }
  .btns .ok { border-color: #0a74cc; }
  .grip { position: absolute; right: 2px; bottom: 1px; }

  .frame { position: absolute; left: 328px; top: 139px; width: 642px; height: 457px; border: 3px solid #fe2013; border-radius: 3px; pointer-events: none; }
  .arrow { position: absolute; left: 22px; top: 101px; pointer-events: none; }
  .mark { position: absolute; right: 14px; bottom: 8px; color: #c4c4c4; font: 19px/26px "Noto Sans", "Noto Sans CJK SC", sans-serif; }
</style>
